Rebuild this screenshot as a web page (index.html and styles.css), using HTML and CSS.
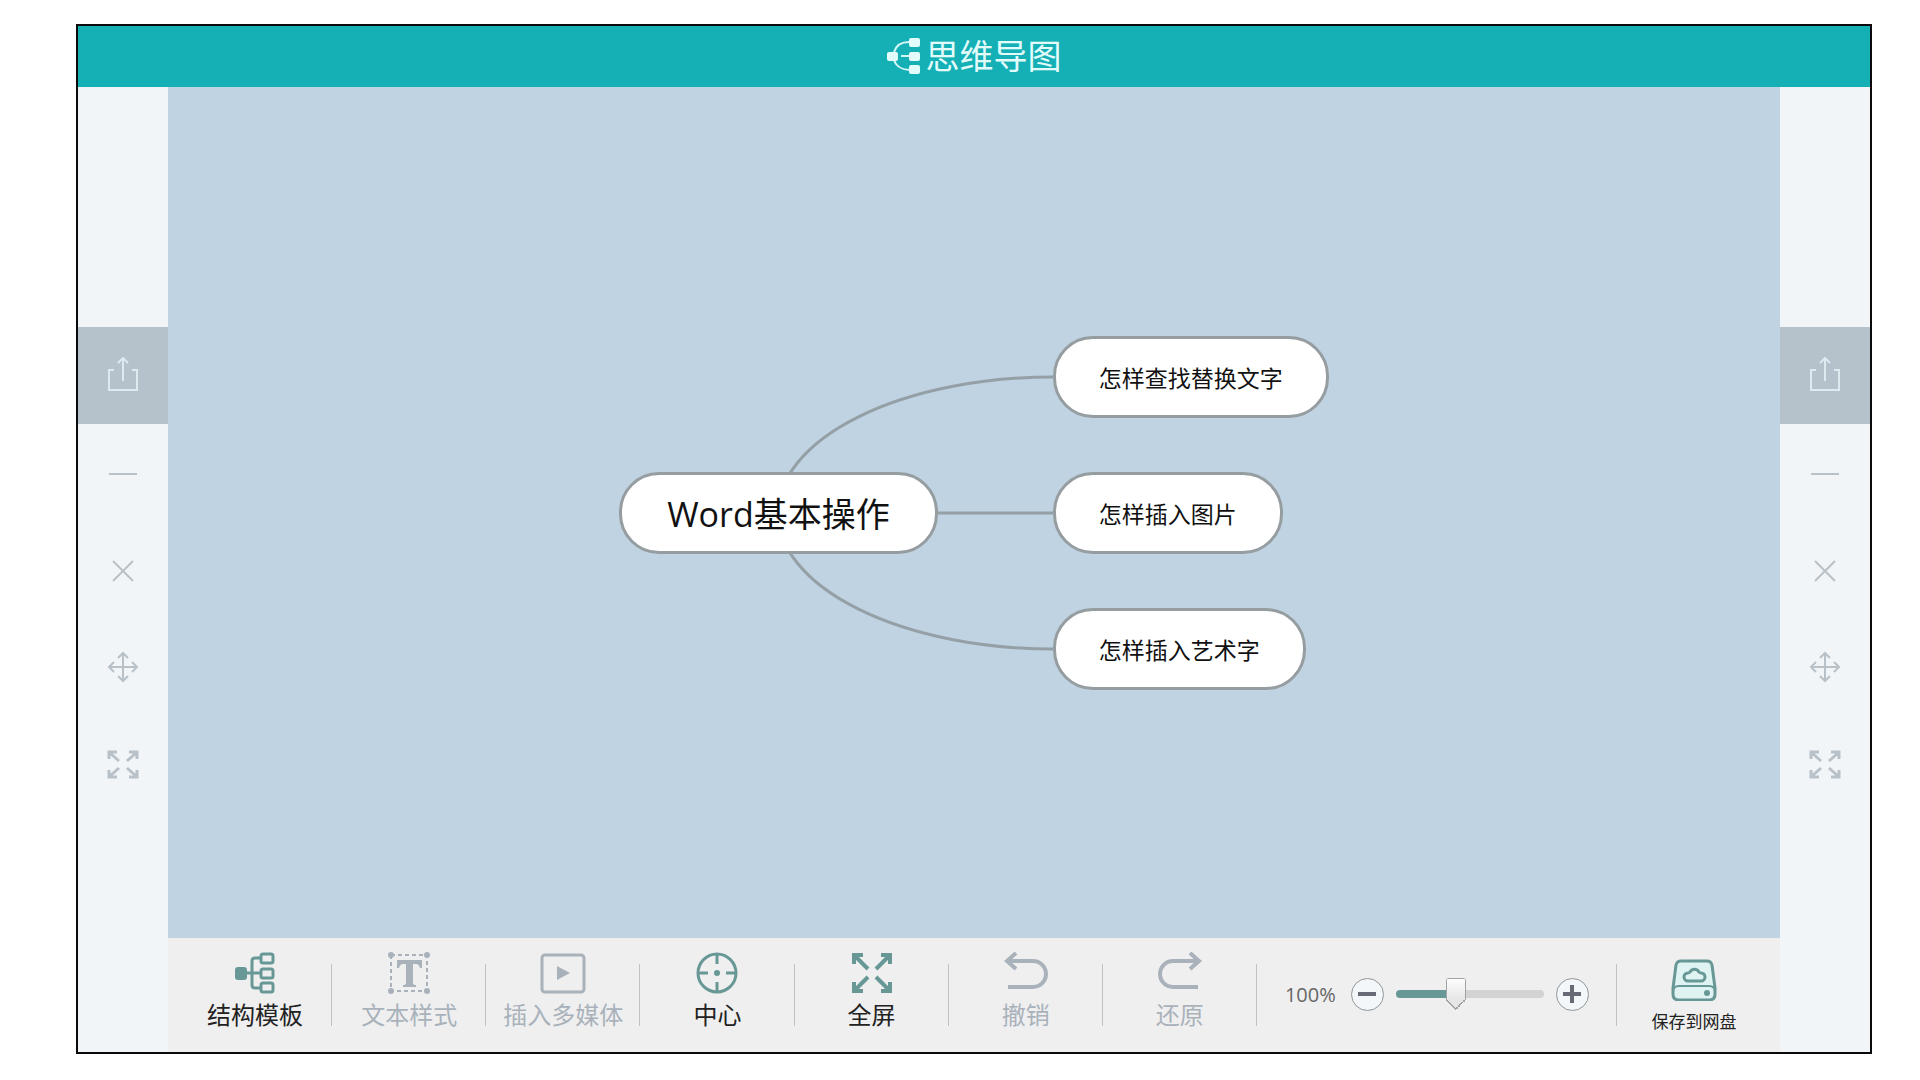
FILE: index.html
```html
<!DOCTYPE html>
<html lang="zh-CN">
<head>
    <meta charset="UTF-8">
    <meta name="viewport" content="width=device-width, initial-scale=1.0">
    <title>思维导图</title>
    <link rel="stylesheet" href="styles.css">
</head>
<body>
    <!-- 左右侧栏共用的图标 -->
    <svg class="sprite" aria-hidden="true">
        <symbol id="i-share" viewBox="0 0 34 38">
            <path d="M8 13H3v20h28V13h-5M17 24V2M12 6l5-5 5 5"/>
        </symbol>
        <symbol id="i-min" viewBox="0 0 34 38">
            <path d="M3 20h28"/>
        </symbol>
        <symbol id="i-close" viewBox="0 0 34 38">
            <path d="M7 10l20 20M27 10L7 30"/>
        </symbol>
        <symbol id="i-move" viewBox="0 0 34 38">
            <path d="M17 5v28M3 19h28M12 10l5-5 5 5M12 28l5 5 5-5M8 14l-5 5 5 5M26 14l5 5-5 5"/>
        </symbol>
        <symbol id="i-expand" viewBox="0 0 34 38">
            <path d="M3 14V7h8M4 8l9 8M31 14V7h-8M30 8L21 16M3 25v7h8M4 31l9-8M31 25v7h-8M30 31L21 23" stroke-width="3"/>
        </symbol>
    </svg>

    <div class="app">
        <header class="header">
            <svg class="logo" viewBox="0 0 34 36" aria-hidden="true">
                <path d="M7 14C9 8 14 4 22 4M7 22c2 6 8 10 16 10M14 18h8" fill="none" stroke="#d4f6f6" stroke-width="2"/>
                <rect x="0" y="14" width="11" height="9" rx="2"/>
                <rect x="22" y="0" width="11" height="9" rx="2"/>
                <rect x="22" y="14" width="11" height="9" rx="2"/>
                <rect x="22" y="27" width="11" height="9" rx="2"/>
            </svg>
            <h1>思维导图</h1>
        </header>

        <div class="workspace">
            <nav class="sidebar" aria-label="左侧工具">
                <button class="side-btn active" aria-label="分享"><svg><use href="#i-share"/></svg></button>
                <button class="side-btn" aria-label="最小化"><svg><use href="#i-min"/></svg></button>
                <button class="side-btn" aria-label="关闭"><svg><use href="#i-close"/></svg></button>
                <button class="side-btn" aria-label="移动"><svg><use href="#i-move"/></svg></button>
                <button class="side-btn" aria-label="展开"><svg><use href="#i-expand"/></svg></button>
            </nav>

            <main class="main">
                <div class="canvas">
                    <div class="mindmap">
                        <svg class="links" width="434" height="354" viewBox="0 0 434 354" aria-hidden="true">
                            <path d="M159 177A275 136 0 0 1 434 41M159 177A275 136 0 0 0 434 313M300 177H434"/>
                        </svg>
                        <div class="node root">Word基本操作</div>
                        <div class="children">
                            <div class="node">怎样查找替换文字</div>
                            <div class="node">怎样插入图片</div>
                            <div class="node">怎样插入艺术字</div>
                        </div>
                    </div>
                </div>

                <div class="toolbar">
                    <button class="tool">
                        <svg viewBox="0 0 46 42">
                            <rect x="3" y="15" width="12" height="13" rx="3" fill="currentColor" stroke="none"/>
                            <path d="M14 21H28M28 6h-5q-3 0-3 3v24q0 3 3 3h5"/>
                            <rect x="29" y="2" width="12" height="9" rx="2"/>
                            <rect x="29" y="17" width="12" height="9" rx="2"/>
                            <rect x="29" y="31" width="12" height="9" rx="2"/>
                        </svg>
                        <span>结构模板</span>
                    </button>
                    <button class="tool" disabled>
                        <svg viewBox="0 0 46 42">
                            <path d="M5 3H41V39H5Z" stroke-width="2" stroke-dasharray="4 3"/>
                            <g fill="currentColor" stroke="none">
                                <circle cx="5" cy="3" r="3"/>
                                <circle cx="41" cy="3" r="3"/>
                                <circle cx="5" cy="39" r="3"/>
                                <circle cx="41" cy="39" r="3"/>
                                <path d="M11 8h25v8h-2q-1-4-4-4h-3v19q0 2 3 2v2H17v-2q3 0 3-2V12h-3q-3 0-4 4h-2z"/>
                            </g>
                        </svg>
                        <span>文本样式</span>
                    </button>
                    <button class="tool" disabled>
                        <svg viewBox="0 0 46 42">
                            <rect x="2" y="3" width="42" height="37" rx="3"/>
                            <path d="M17 14l13 7-13 7z" fill="currentColor" stroke="none"/>
                        </svg>
                        <span>插入多媒体</span>
                    </button>
                    <button class="tool">
                        <svg viewBox="0 0 46 42">
                            <circle cx="23" cy="21" r="19"/>
                            <path d="M23 2v10M23 30v11M4 21h10M32 21h10"/>
                            <circle cx="23" cy="21" r="3" fill="currentColor" stroke="none"/>
                        </svg>
                        <span>中心</span>
                    </button>
                    <button class="tool">
                        <svg viewBox="0 0 46 42">
                            <path d="M6 4l13 13M40 4L27 17M6 38l13-13M40 38L27 25M5 12V3h9M32 3h9v9M5 30v9h9M32 39h9v-9" stroke-width="4"/>
                        </svg>
                        <span>全屏</span>
                    </button>
                    <button class="tool" disabled>
                        <svg viewBox="0 0 46 42">
                            <path d="M13 1L4 9l9 8M5 9h25a12 12 0 0 1 0 26H5" stroke-width="4"/>
                        </svg>
                        <span>撤销</span>
                    </button>
                    <button class="tool" disabled>
                        <svg viewBox="0 0 46 42">
                            <path d="M33 1l9 8-9 8M41 9H16a12 12 0 0 0 0 26h25" stroke-width="4"/>
                        </svg>
                        <span>还原</span>
                    </button>

                    <div class="zoom">
                        <output for="zoom">100%</output>
                        <button class="round" aria-label="缩小"><svg viewBox="0 0 20 20"><path d="M1 10h18"/></svg></button>
                        <input type="range" id="zoom" aria-label="缩放" min="10" max="240" value="100">
                        <button class="round" aria-label="放大"><svg viewBox="0 0 20 20"><path d="M1 10h18M10 1v18"/></svg></button>
                    </div>

                    <button class="tool save">
                        <svg viewBox="0 0 46 42">
                            <path d="M10 2h26q4 0 5 4l3 23v6q0 6-6 6H8q-6 0-6-6v-6L5 6q1-4 5-4z" fill="#dff3f2"/>
                            <path d="M2 33q0-6 6-6h30q6 0 6 6" stroke-width="2"/>
                            <path d="M17 22a4 4 0 0 1 0-8q1 0 2-1a5 5 0 0 1 9 0q1 1 2 1a4 4 0 0 1 0 8z"/>
                            <circle cx="36" cy="34" r="3" fill="currentColor" stroke="none"/>
                        </svg>
                        <span>保存到网盘</span>
                    </button>
                </div>
            </main>

            <nav class="sidebar" aria-label="右侧工具">
                <button class="side-btn active" aria-label="分享"><svg><use href="#i-share"/></svg></button>
                <button class="side-btn" aria-label="最小化"><svg><use href="#i-min"/></svg></button>
                <button class="side-btn" aria-label="关闭"><svg><use href="#i-close"/></svg></button>
                <button class="side-btn" aria-label="移动"><svg><use href="#i-move"/></svg></button>
                <button class="side-btn" aria-label="展开"><svg><use href="#i-expand"/></svg></button>
            </nav>
        </div>
    </div>
</body>
</html>
```
FILE: styles.css
```css
* {
    box-sizing: border-box;
}

body {
    font-family: "Open Sans", "Noto Sans CJK SC", sans-serif;
    background-color: white;
    margin: 0;
    padding: 24px 48px 26px 76px;
    display: flex;
    min-height: 100vh;
}

button {
    font-family: inherit;
    background: none;
    border: none;
    padding: 0;
    cursor: pointer;
}

button:disabled {
    cursor: default;
}

.sprite {
    display: none;
}

.app {
    flex: 1;
    display: flex;
    flex-direction: column;
    border: 2px solid #0a0a0a;
}

/* header */
.header {
    display: flex;
    justify-content: center;
    align-items: center;
    gap: 5px;
    height: 61px;
    padding-bottom: 2px;
    background-color: #14b0b5;
    color: #e2fbfb;
}

.header h1 {
    margin: 0;
    font-size: 34px;
    line-height: 48px;
    font-weight: normal;
}

.logo {
    width: 34px;
    height: 36px;
    fill: #e2fbfb;
}

.workspace {
    flex: 1;
    display: flex;
}

/* side bars */
.sidebar {
    width: 90px;
    display: flex;
    flex-direction: column;
    justify-content: center;
    background-color: #f1f5f8;
}

.side-btn {
    display: flex;
    justify-content: center;
    align-items: center;
    height: 97px;
    color: #b9c1c8;
}

.side-btn svg {
    width: 34px;
    height: 38px;
    fill: none;
    stroke: currentColor;
    stroke-width: 2;
}

.side-btn.active {
    background-color: #b5c2cc;
    color: #dfe9f0;
}

.main {
    flex: 1;
    display: flex;
    flex-direction: column;
}

/* mind map */
.canvas {
    flex: 1;
    display: flex;
    justify-content: center;
    align-items: center;
    background-color: #c0d3e2;
}

.mindmap {
    position: relative;
    display: flex;
    align-items: center;
    gap: 115px;
}

.links {
    position: absolute;
    left: 0;
    top: 0;
    fill: none;
    stroke: #94a0a6;
    stroke-width: 3;
}

.children {
    display: flex;
    flex-direction: column;
    align-items: flex-start;
    gap: 54px;
}

.node {
    position: relative;
    display: flex;
    align-items: center;
    height: 82px;
    padding: 0 43px;
    background-color: white;
    border: 3px solid #969da1;
    border-radius: 40px;
    color: #111;
    font-size: 23px;
    white-space: nowrap;
}

.node.root {
    padding: 0 45px;
    font-size: 34px;
}

/* bottom toolbar */
.toolbar {
    display: grid;
    grid-template-columns: repeat(7, 1fr) 360px 1fr;
    align-items: center;
    height: 114px;
    padding: 0 9px 0 10px;
    background-color: #efefef;
}

.tool {
    display: flex;
    flex-direction: column;
    align-items: center;
    gap: 5px;
    height: 100%;
    padding-top: 14px;
    color: #689896;
    background: linear-gradient(#bfc3c6, #bfc3c6) right 26px / 1px 62px no-repeat;
}

.tool svg {
    width: 46px;
    height: 42px;
    fill: none;
    stroke: currentColor;
    stroke-width: 3;
}

.tool span {
    color: #222;
    font-size: 24px;
    line-height: 32px;
    white-space: nowrap;
}

.tool:disabled,
.tool:disabled span {
    color: #a9b2bb;
}

.tool.save {
    padding-top: 21px;
    background: none;
}

.tool.save span {
    font-size: 17px;
}

.zoom {
    display: flex;
    align-items: center;
    gap: 12px;
    height: 100%;
    padding: 0 28px 2px 28px;
    background: linear-gradient(#bfc3c6, #bfc3c6) right 26px / 1px 62px no-repeat;
}

.zoom output {
    margin-right: 3px;
    color: #666;
    font-size: 20px;
}

.round {
    display: flex;
    justify-content: center;
    align-items: center;
    width: 33px;
    height: 33px;
    border: 1px solid #8f9699;
    border-radius: 50%;
    background-color: #f3f7f9;
    color: #666b76;
}

.round svg {
    width: 20px;
    height: 20px;
    stroke: currentColor;
    stroke-width: 4;
}

.zoom input {
    -webkit-appearance: none;
    appearance: none;
    flex: 1;
    min-width: 0;
    height: 32px;
    margin: 0;
    background: none;
}

.zoom input::-webkit-slider-runnable-track {
    height: 8px;
    border-radius: 4px;
    background: linear-gradient(to right, #689896 40%, #d3d3d3 40%);
}

/* pointed handle: two diagonal corners, then sides, top and fill */
.zoom input::-webkit-slider-thumb {
    -webkit-appearance: none;
    appearance: none;
    width: 20px;
    height: 32px;
    margin-top: -12px;
    border-radius: 3px;
    background:
        linear-gradient(to top right, transparent 50%, #a0a4a6 50% 60%, #e6e6e6 60%) left bottom / 10px 10px no-repeat,
        linear-gradient(to top left, transparent 50%, #a0a4a6 50% 60%, #e6e6e6 60%) right bottom / 10px 10px no-repeat,
        linear-gradient(#a0a4a6, #a0a4a6) left top / 1px 22px no-repeat,
        linear-gradient(#a0a4a6, #a0a4a6) right top / 1px 22px no-repeat,
        linear-gradient(#a0a4a6, #a0a4a6) left top / 20px 1px no-repeat,
        linear-gradient(#fefefe, #e6e6e6) left top / 20px 22px no-repeat;
}
```
